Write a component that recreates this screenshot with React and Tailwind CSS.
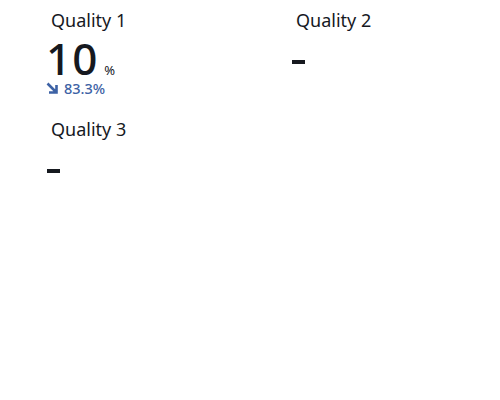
export default function App() {
  const font = { fontFamily: '"Noto Sans", "Open Sans", sans-serif' };
  const Dash = () => (
    <div className="h-[44px] flex items-center">
      <div className="w-[13px] h-[4px] bg-[#16191f] ml-[1px] mt-[8px]" />
    </div>
  );
  return (
    <div className="w-[500px] h-[400px] bg-white text-[#16191f]" style={font}>
      <div className="grid grid-cols-[245px_1fr] pl-[46px] pt-[8px] gap-y-[17px]">
        <div>
          <div className="pl-[5px] text-[18px] leading-[24px]">Quality 1</div>
          <div className="flex items-baseline mt-[4px]">
            <span className="text-[44px] leading-[44px] font-medium tracking-[1px]">10</span>
            <span className="text-[13px] leading-[16px] ml-[6px]">%</span>
          </div>
          <div className="flex items-center gap-[6px] text-[14.5px] leading-[18px] font-medium text-[#3d62a5] -mt-[1px] mb-[3px]">
            <svg width="12" height="12" viewBox="0 0 12 12">
              <path d="M1.5 1.5 L10 10 M10.5 3 V10.5 H3" stroke="#3d62a5" strokeWidth="2.6" fill="none" strokeLinecap="butt" />
            </svg>
            <span>83.3%</span>
          </div>
        </div>
        <div>
          <div className="pl-[5px] text-[18px] leading-[24px]">Quality 2</div>
          <div className="mt-[4px]"><Dash /></div>
        </div>
        <div>
          <div className="pl-[5px] text-[18px] leading-[24px]">Quality 3</div>
          <div className="mt-[4px]"><Dash /></div>
        </div>
      </div>
    </div>
  );
}
